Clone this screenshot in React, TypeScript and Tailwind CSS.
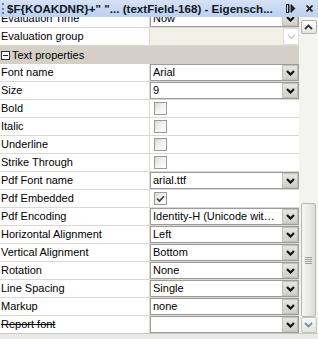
import { ReactNode } from 'react'

type Row =
  | { label: string; kind: 'combo'; value: string; strike?: boolean }
  | { label: string; kind: 'check'; checked?: boolean }

const rows: Row[] = [
  { label: 'Font name', kind: 'combo', value: 'Arial' },
  { label: 'Size', kind: 'combo', value: '9' },
  { label: 'Bold', kind: 'check' },
  { label: 'Italic', kind: 'check' },
  { label: 'Underline', kind: 'check' },
  { label: 'Strike Through', kind: 'check' },
  { label: 'Pdf Font name', kind: 'combo', value: 'arial.ttf' },
  { label: 'Pdf Embedded', kind: 'check', checked: true },
  { label: 'Pdf Encoding', kind: 'combo', value: 'Identity-H (Unicode with horizontal writing)' },
  { label: 'Horizontal Alignment', kind: 'combo', value: 'Left' },
  { label: 'Vertical Alignment', kind: 'combo', value: 'Bottom' },
  { label: 'Rotation', kind: 'combo', value: 'None' },
  { label: 'Line Spacing', kind: 'combo', value: 'Single' },
  { label: 'Markup', kind: 'combo', value: 'none' },
  { label: 'Report font', kind: 'combo', value: '', strike: true },
]

function Chevron({ disabled }: { disabled?: boolean }) {
  return (
    <svg width="9" height="6" viewBox="0 0 9 6">
      <path
        d="M1 1 L4.5 4.5 L8 1"
        fill="none"
        stroke={disabled ? '#c4c4c0' : '#111'}
        strokeWidth={disabled ? 1.2 : 2.2}
      />
    </svg>
  )
}

function DropButton({ disabled }: { disabled?: boolean }) {
  return (
    <div
      className={
        disabled
          ? 'w-[16px] h-full shrink-0 flex items-center justify-center border border-[#dcdcd8] bg-white'
          : 'w-[16px] h-full shrink-0 flex items-center justify-center border border-[#c2c2bc] bg-gradient-to-b from-[#e6e5e0] to-[#d0cfc8]'
      }
    >
      <Chevron disabled={disabled} />
    </div>
  )
}

function Combo({ value }: { value: string }) {
  return (
    <div className="h-full flex border border-[#9c9c9c] bg-white">
      <div className="flex-1 min-w-0 px-[2px] truncate leading-[15px]">{value}</div>
      <DropButton />
    </div>
  )
}

function Checkbox({ checked }: { checked?: boolean }) {
  return (
    <div className="ml-[4px] w-[13px] h-[13px] border border-[#9a9a9a] bg-gradient-to-br from-[#d8d8d4] via-[#f2f2f0] to-white flex items-center justify-center">
      {checked && (
        <svg width="9" height="8" viewBox="0 0 9 8">
          <path d="M1 3.5 L3.5 6 L8 1.2" fill="none" stroke="#3a3a3a" strokeWidth="1.6" />
        </svg>
      )}
    </div>
  )
}

function PropRow({ label, strike, children }: { label: string; strike?: boolean; children: ReactNode }) {
  return (
    <div className="h-[18px] flex border-b border-[#dad8d0] shrink-0">
      <div className="w-[150px] shrink-0 border-r border-[#dad8d0] pl-[1px] leading-[17px] bg-white whitespace-nowrap overflow-hidden">
        <span className={strike ? 'line-through' : ''}>{label}</span>
      </div>
      <div className="flex-1 min-w-0 flex items-center bg-white">{children}</div>
    </div>
  )
}

export default function App() {
  return (
    <div
      className="w-[318px] h-[339px] overflow-hidden bg-[#e9e9e6] flex flex-col text-[11px] text-black"
      style={{ fontFamily: '"Liberation Sans", Arial, sans-serif' }}
    >
      {/* Title bar */}
      <div className="h-[17px] shrink-0 flex items-center bg-gradient-to-b from-[#d5e2f6] to-[#bcd0ef]">
        <div className="w-[2px] h-[11px] ml-[2px] mr-[3px] border-l-2 border-dotted border-[#6d7f9c]" />
        <div className="flex-1 min-w-0 font-bold text-[11.6px] whitespace-nowrap overflow-hidden text-[#101820]">
          $F{'{'}KOAKDNR{'}'}+" "... (textField-168) - Eigensch...
        </div>
        <div className="flex items-center gap-[10px] pr-[5px] pl-[6px]">
          <svg width="10" height="9" viewBox="0 0 10 9">
            <rect x="0.5" y="0.5" width="2" height="8" fill="none" stroke="#222" />
            <rect x="3.5" y="0.5" width="1" height="8" fill="#222" />
            <path d="M5 0 L9.5 4.5 L5 9 Z" fill="#222" />
          </svg>
          <svg width="7" height="7" viewBox="0 0 7 7">
            <path d="M0.5 0.5 L6.5 6.5 M6.5 0.5 L0.5 6.5" stroke="#222" strokeWidth="1.8" />
          </svg>
        </div>
      </div>

      <div className="flex h-[317px] shrink-0 border-b border-[#c8c8c4]">
        {/* Property grid */}
        <div className="w-[299px] overflow-hidden flex flex-col bg-white">
          <div className="mt-[-7px]">
            <PropRow label="Evaluation Time">
              <div className="flex-1 min-w-0 h-full">
                <Combo value="Now" />
              </div>
            </PropRow>
          </div>
          <PropRow label="Evaluation group">
            <div className="h-full flex-1 flex bg-[#f2f1e8]">
              <div className="flex-1" />
              <DropButton disabled />
            </div>
          </PropRow>
          <div className="h-[18px] shrink-0 bg-[#d4d0c8] flex items-center pl-[1px] gap-[2px]">
            <div className="w-[9px] h-[9px] border border-[#333] bg-white flex items-center justify-center">
              <div className="w-[5px] h-[1px] bg-[#222]" />
            </div>
            <span>Text properties</span>
          </div>
          {rows.map((r) => (
            <PropRow key={r.label} label={r.label} strike={r.kind === 'combo' ? r.strike : false}>
              {r.kind === 'combo' ? (
                <div className="flex-1 min-w-0 h-full">
                  <Combo value={r.value} />
                </div>
              ) : (
                <Checkbox checked={r.checked} />
              )}
            </PropRow>
          ))}
        </div>

        {/* Scrollbar */}
        <div className="flex-1 bg-[#f3f3ef] flex flex-col items-center pt-[3px]">
          <div className="w-[16px] h-[14px] shrink-0 border border-[#b4b4ae] rounded-[2px] bg-gradient-to-b from-white to-[#e4e4de] flex items-center justify-center">
            <svg width="9" height="6" viewBox="0 0 9 6">
              <path d="M1 5 L4.5 1.5 L8 5" fill="none" stroke="#333" strokeWidth="1.8" />
            </svg>
          </div>
          <div className="flex-1" />
          <div className="w-[15px] h-[114px] shrink-0 border border-[#b8b8b2] rounded-[2px] bg-gradient-to-r from-[#f6f6f2] via-[#ebebe6] to-[#dcdcd6] flex flex-col items-center justify-center gap-[1px]">
            <div className="w-[7px] h-[1px] bg-[#a0a0a0]" />
            <div className="w-[7px] h-[1px] bg-[#a0a0a0]" />
            <div className="w-[7px] h-[1px] bg-[#a0a0a0]" />
            <div className="w-[7px] h-[1px] bg-[#a0a0a0]" />
          </div>
          <div className="w-[16px] h-[16px] shrink-0 border border-[#c4c4be] rounded-[2px] bg-gradient-to-b from-[#f8f8f5] to-[#e6e6e0] flex items-center justify-center">
            <svg width="9" height="6" viewBox="0 0 9 6">
              <path d="M1 1 L4.5 4.5 L8 1" fill="none" stroke="#7d8ea3" strokeWidth="1.8" />
            </svg>
          </div>
        </div>
      </div>
    </div>
  )
}
